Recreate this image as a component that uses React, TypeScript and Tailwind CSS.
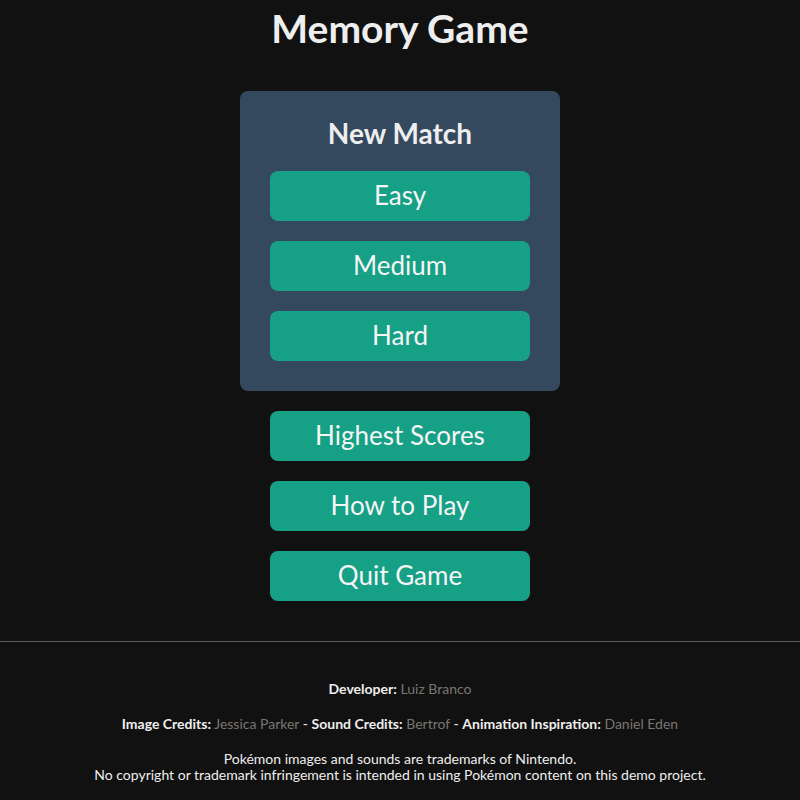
const btn =
  "w-[260px] h-[50px] rounded-lg bg-[#16a085] text-[#f5f5f5] text-[26px] leading-none pb-[3px] flex items-center justify-center";

export default function App() {
  return (
    <div
      className="min-h-screen bg-[#111111] text-[#eeeeee] flex flex-col items-center"
      style={{ fontFamily: "Lato, 'Noto Sans', sans-serif" }}
    >
      <h1 className="mt-[8px] h-[43px] text-[39px] font-bold leading-[41px]">Memory Game</h1>

      <div className="mt-[40px] w-[320px] rounded-lg bg-[#34495e] px-[30px] pt-[20px] pb-[30px] flex flex-col items-center">
        <h2 className="h-[50px] text-[28px] font-bold leading-[44px] mb-[10px]">New Match</h2>
        <div className="flex flex-col gap-[20px]">
          <button className={btn}>Easy</button>
          <button className={btn}>Medium</button>
          <button className={btn}>Hard</button>
        </div>
      </div>

      <div className="mt-[20px] flex flex-col gap-[20px]">
        <button className={btn}>Highest Scores</button>
        <button className={btn}>How to Play</button>
        <button className={btn}>Quit Game</button>
      </div>

      <footer className="mt-[40px] w-full border-t border-[#5a5a5a] pt-[39px] text-[14px] leading-[16px] text-center">
        <p>
          <span className="font-bold">Developer:</span> <span className="text-[#7a7672]">Luiz Branco</span>
        </p>
        <p className="mt-[19px]">
          <span className="font-bold">Image Credits:</span> <span className="text-[#7a7672]">Jessica Parker</span> -{" "}
          <span className="font-bold">Sound Credits:</span> <span className="text-[#7a7672]">Bertrof</span> -{" "}
          <span className="font-bold">Animation Inspiration:</span> <span className="text-[#7a7672]">Daniel Eden</span>
        </p>
        <p className="mt-[19px]">
          Pokémon images and sounds are trademarks of Nintendo.
          <br />
          No copyright or trademark infringement is intended in using Pokémon content on this demo project.
        </p>
      </footer>
    </div>
  );
}
